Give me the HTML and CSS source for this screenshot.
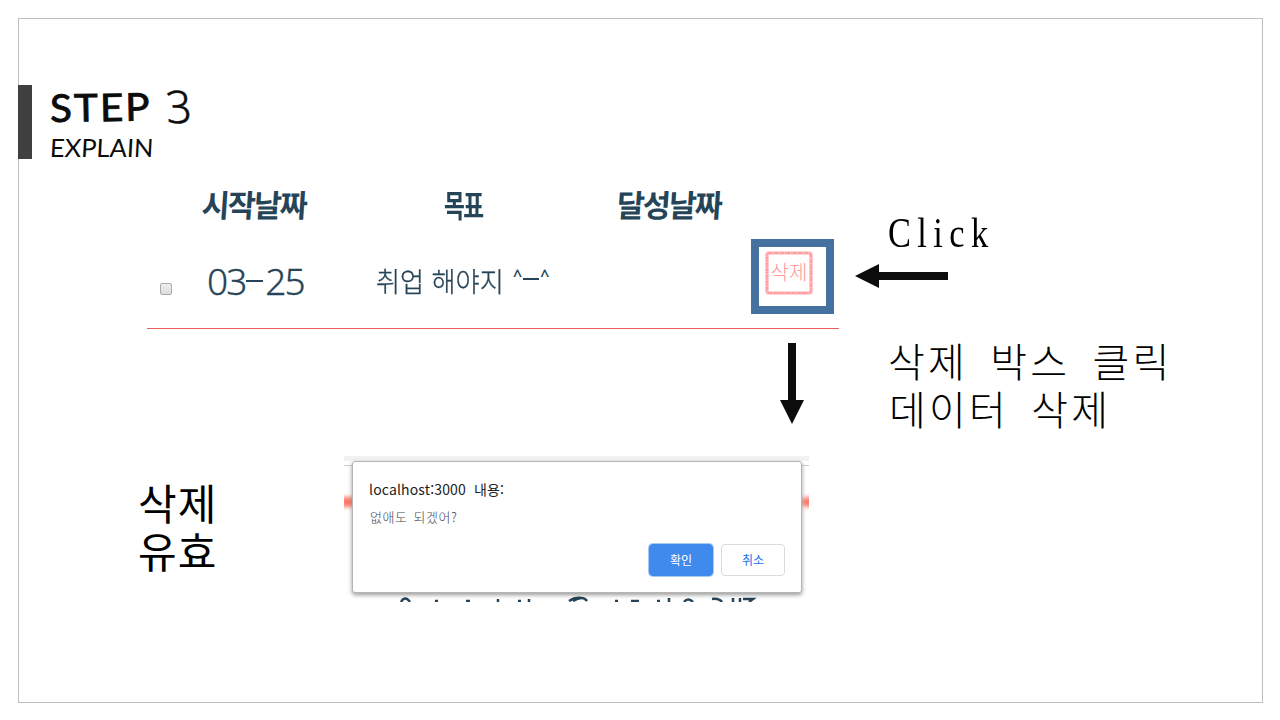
FILE: index.html
```html
<!DOCTYPE html>
<html lang="ko">
<head>
<meta charset="utf-8">
<title>Step 3</title>
<link rel="stylesheet" href="styles.css">
</head>
<body>
<main class="slide">
  <header class="heading">
    <div class="heading-text">
      <h1 class="title"><span class="title-word">STEP</span> <span class="title-num">3</span></h1>
      <p class="subtitle">EXPLAIN</p>
    </div>
  </header>

  <section class="demo">
    <div class="goals">
      <div class="row row-head">
        <span class="col-date"><b class="hand-head">시작날짜</b></span>
        <span class="col-goal"><b class="hand-head head-goal">목표</b></span>
        <span class="col-done"><b class="hand-head head-done">달성날짜</b></span>
      </div>
      <div class="row row-item">
        <span class="check"></span>
        <span class="item-date">03<i class="dash"></i>25</span>
        <span class="item-goal">취업 해야지</span>
        <span class="item-face">^<i class="mouth"></i>^</span>
        <span class="highlight"><span class="delete"><svg class="delete-edge" viewBox="0 0 48 44"><rect class="edge-soft" x="2" y="2" width="44" height="40" rx="2"/><rect class="edge-rough" x="2" y="2" width="44" height="40" rx="2"/></svg><span class="delete-label">삭제</span></span></span>
      </div>
    </div>
    <div class="notes">
      <p class="click">Click</p>
      <svg class="arrow-left" viewBox="0 0 93 24"><path d="M0 12 24 0V8H93V16H24V24Z"/></svg>
      <p class="note">삭제 박스 클릭<br><span class="note-second">데이터 삭제</span></p>
    </div>
  </section>

  <svg class="arrow-down" viewBox="0 0 24 81"><path d="M8 0H16V57H24L12 81 0 57H8Z"/></svg>

  <section class="result">
    <p class="result-label">삭제<br>유효</p>
    <div class="capture">
      <div class="toolbar"></div>
      <div class="smudge smudge-left"></div>
      <div class="smudge smudge-right"></div>
      <svg class="scraps" viewBox="0 0 465 6"><path d="M57 6Q61-1 66 6M91 5h3M122 5h4M154 3v3M174 5h3M185 3v3M225 5Q231 1 238 2M229 5Q239-1 243 5M271 5h3M287 5h8M313 5h3M325 2v4M340 6Q344 1 349 6M368 3Q375 2 378 6M389 2v4M396 2v4M399 3h10L405 6"/></svg>
      <div class="dialog">
        <p class="host">localhost:3000 내용:</p>
        <p class="message">없애도 되겠어?</p>
        <div class="actions">
          <button class="btn btn-ok">확인</button>
          <button class="btn btn-cancel">취소</button>
        </div>
      </div>
    </div>
  </section>
</main>
</body>
</html>
```

FILE: styles.css
```css
* { box-sizing: border-box; }
body { margin: 0; background: #fff; font-family: "Noto Sans CJK KR", sans-serif; }
p, h1 { margin: 0; }
svg { display: block; }
span, b { white-space: nowrap; }

.slide { position: relative; width: 1245px; height: 685px; margin: 18px; border: 1px solid #bfbfbf; padding-top: 66px; }

.heading { display: flex; width: 250px; height: 74px; margin-left: -1px; border-left: 14px solid #404040; padding-left: 18px; }
.title { display: flex; gap: 12px; height: 46px; font: 400 38px/44px Lato, sans-serif; color: #0c0c0c; }
.title-word { width: 104px; letter-spacing: 2px; transform: scaleX(1.06) rotate(-1deg); transform-origin: left; -webkit-text-stroke: .9px #0c0c0c; }
.title-num { font: 300 45px/42px "Noto Sans", sans-serif; transform: skewX(4deg); -webkit-text-stroke: .5px #0c0c0c; }
.subtitle { font: 400 25px/33px Lato, sans-serif; color: #0c0c0c; transform: scaleX(1.02) skewX(-3deg); transform-origin: left; }

.demo { display: flex; height: 280px; }
.goals { width: 692px; height: 170px; margin-left: 128px; border-bottom: 1px solid #e9605f; color: #264457; }
.row { display: flex; }
.row-head { height: 80px; padding: 23px 0 0 55px; }
.col-date { width: 242px; }
.col-goal { width: 173px; }
.hand-head { display: inline-block; font-size: 31px; line-height: 44px; letter-spacing: -2px; transform: scaleX(.98) skewX(-4deg); transform-origin: left; }
.head-goal { transform: scaleX(.73); }
.row-item { height: 89px; padding-left: 13px; align-items: flex-start; }
.check { width: 12px; height: 12px; margin-top: 44px; border: 1px solid #aaa; border-radius: 2px; background: linear-gradient(#eee, #ddd); }
.item-date { display: flex; width: 169px; margin: 17px 0 0 35px; font: 300 37px/50px "Noto Sans", sans-serif; letter-spacing: -2px; -webkit-text-stroke: .3px #264457; }
.dash { width: 17px; height: 2px; margin: 24px 2px 0 1px; background: #264457; }
.item-goal { width: 137px; margin-top: 24px; font-size: 27px; line-height: 36px; font-weight: 300; transform: scaleX(.97); transform-origin: left; -webkit-text-stroke: .3px #264457; }
.item-face { display: flex; gap: 1px; width: 238px; margin-top: 26px; font: 600 16px/20px "Noto Sans", sans-serif; }
.mouth { width: 16px; height: 2px; margin-top: 13px; background: #264457; }
.highlight { flex: none; width: 83px; height: 75px; border: 8px solid #44719f; padding: 4px 0 0 6px; }
.delete { display: grid; width: 48px; height: 44px; color: #ff9a9a; }
.delete-edge, .delete-label { grid-area: 1 / 1; }
.delete-edge rect { fill: none; }
.edge-soft { stroke: #ffc4c6; stroke-width: 3.6; }
.edge-rough { stroke: #ff9ca0; stroke-width: 2.2; stroke-dasharray: 3 1 1.5 .5; }
.delete-label { font-size: 20px; line-height: 41px; font-weight: 300; text-align: center; }

.notes { padding: 48px 0 0 16px; color: #000; }
.click { margin-left: 33px; font: 400 43px/52px "Liberation Serif", serif; letter-spacing: 8px; transform: scaleX(.8); transform-origin: left; }
.arrow-left { width: 93px; height: 24px; margin-top: 5px; fill: #0c0c0c; }
.note { margin: 48px 0 0 33px; font-size: 40px; line-height: 48px; font-weight: 300; letter-spacing: 3.2px; word-spacing: 7.8px; white-space: nowrap; }
.note-second { margin-left: 1px; }

.arrow-down { position: absolute; left: 761px; top: 324px; width: 24px; height: 81px; fill: #0c0c0c; }

.result { display: flex; margin-top: 17px; padding-left: 119px; }
.result-label { width: 206px; margin-top: 22px; font-size: 42px; line-height: 48px; letter-spacing: 1px; color: #000; }
.capture { position: relative; width: 465px; height: 146px; padding: 5px 7px 5px 8px; overflow: hidden; }
.toolbar { position: absolute; inset: 0 0 auto; height: 10px; border-bottom: 1px solid #ccc; background: linear-gradient(#f1f2f4 5px, #fff 5px); }
.smudge { position: absolute; top: 41px; width: 12px; height: 10px; background: #ff7667; filter: blur(2px); }
.smudge-left { left: -3px; }
.smudge-right { right: -5px; border-radius: 5px; }
.scraps { position: absolute; left: 0; bottom: 0; width: 465px; height: 6px; fill: none; stroke: #264457; stroke-width: 2.5; }
.dialog { position: relative; height: 132px; padding: 16px 16px; border: 1px solid #b5b5b5; border-radius: 3px; background: #fff; box-shadow: 0 2px 4px #0006; }
.host { font-size: 14px; line-height: 22px; letter-spacing: .15px; word-spacing: 4px; color: #202124; }
.message { margin: 7px 0 0 1px; font-size: 13px; line-height: 20px; letter-spacing: .5px; word-spacing: 2px; font-weight: 300; color: #45494e; }
.actions { display: flex; justify-content: flex-end; gap: 8px; margin-top: 17px; }
.btn { width: 64px; height: 32px; padding: 0; border: 1px solid #dadce0; border-radius: 4px; background: #fff; font: 400 12px/28px "Noto Sans CJK KR", sans-serif; color: #1a73e8; }
.btn-ok { border-color: #4089ed; background: #4089ed; color: #fff; box-shadow: 0 0 0 1px #a7c9f7; }
```
